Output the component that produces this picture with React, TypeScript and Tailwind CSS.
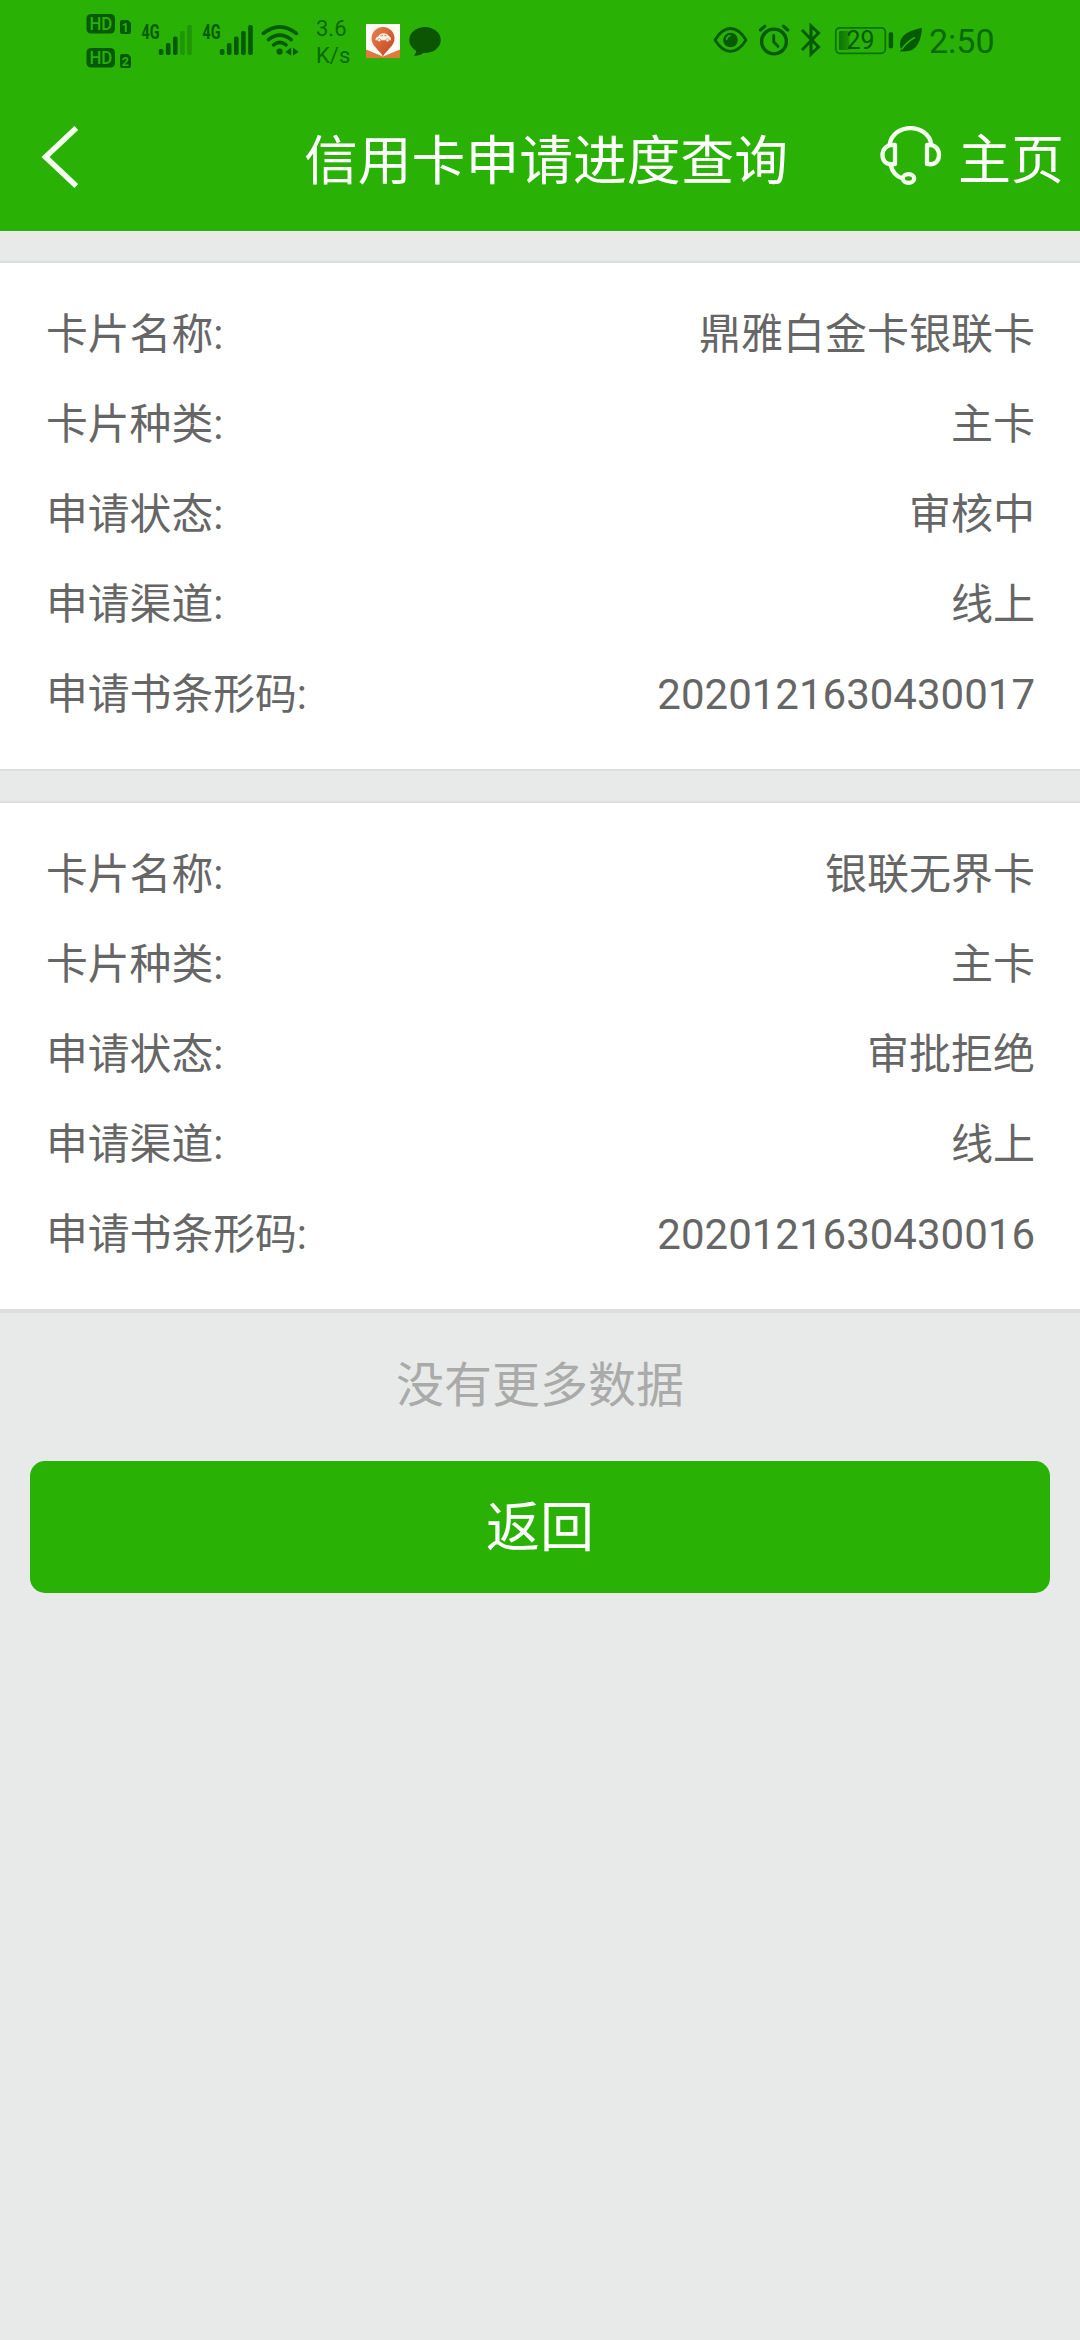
import React from "react";

const FONT = "font-[Roboto,'Noto_Sans_CJK_SC',sans-serif]";

type Field = { label: string; value: string };

const applications: Field[][] = [
  [
    { label: "卡片名称:", value: "鼎雅白金卡银联卡" },
    { label: "卡片种类:", value: "主卡" },
    { label: "申请状态:", value: "审核中" },
    { label: "申请渠道:", value: "线上" },
    { label: "申请书条形码:", value: "2020121630430017" },
  ],
  [
    { label: "卡片名称:", value: "银联无界卡" },
    { label: "卡片种类:", value: "主卡" },
    { label: "申请状态:", value: "审批拒绝" },
    { label: "申请渠道:", value: "线上" },
    { label: "申请书条形码:", value: "2020121630430016" },
  ],
];

function HdBadge({ n }: { n: string }) {
  return (
    <svg width="48" height="22" viewBox="0 0 48 22" className="block">
      <rect x="0.5" y="0" width="28.5" height="19.5" rx="4.5" fill="#065a03" />
      <text x="3.4" y="16" fontSize="18" fontWeight="500" fill="#29b106" textLength="23" lengthAdjust="spacingAndGlyphs">HD</text>
      <path d="M36 6h6l3 3v9q0 2-2 2h-7q-2 0-2-2v-10q0-2 2-2z" fill="#065a03" />
      <text x="39.4" y="18" fontSize="12.5" fontWeight="700" fill="#29b106" textAnchor="middle">{n}</text>
    </svg>
  );
}

function Signal({ level }: { level: number }) {
  const tops = [49, 43, 36.5, 31, 25];
  return (
    <svg width="56" height="80" viewBox="0 0 56 80" className="block shrink-0">
      <text x="1.5" y="38.7" fontSize="20" fontWeight="700" fill="#065a03" textLength="18" lengthAdjust="spacingAndGlyphs">4G</text>
      {tops.map((t, i) => (
        <rect key={t} x={18.8 + i * 7.1} y={t} width="4.6" height={55 - t} rx="1.8" fill="#065a03" opacity={i < level ? 1 : 0.3} />
      ))}
    </svg>
  );
}

function Wifi() {
  return (
    <svg width="40" height="80" viewBox="260 0 40 80" className="block shrink-0" fill="none" stroke="#065a03" strokeWidth="3.6" strokeLinecap="round">
      <path d="M263.3 33.4Q279.8 20.5 296.3 33.4M268.4 39.6Q279.8 30.5 291.2 39.6M273.6 44.8Q279.8 39.8 286 44.8" />
      <circle cx="279.6" cy="51.6" r="3.1" fill="#065a03" stroke="none" />
      <path d="M285.3 52L291.2 47.5V55.5zM293 47.5L298.6 52L293 55.5z" fill="#065a03" stroke="none" />
    </svg>
  );
}

function CarPin() {
  return (
    <svg width="34" height="34" viewBox="0 0 34 34" className="block shrink-0">
      <defs>
        <linearGradient id="pin" x1="0" y1="0" x2="1" y2="1">
          <stop offset="0" stopColor="#e5824f" />
          <stop offset="1" stopColor="#c4431f" />
        </linearGradient>
      </defs>
      <rect width="34" height="34" fill="#fffaf6" />
      <path d="M0 25.5L17 32.5L34 25.5V34H0z" fill="#df7a3e" />
      <path d="M17 32.500C14 26.500 5.500 22 5.500 14.500a11.500 11.500 0 0 1 23 0C28.500 22 20 26.500 17 32.500z" fill="url(#pin)" />
      <path d="M9.500 16.200q-.3-2.800 2.700-3.700Q14 9.200 17.500 9.200q3.700 0 5.500 3 2 .6 2 4z" fill="#fff1e8" />
      <path d="M13.500 12.300q1.500-1.800 3.700-1.800v1.800zM18.300 10.500q2 .1 3.200 1.700h-3.200z" fill="#dba287" />
      <circle cx="13.200" cy="16.200" r="1.500" fill="#fff1e8" stroke="#cf6a43" strokeWidth=".6" />
      <circle cx="21.500" cy="16.200" r="1.500" fill="#fff1e8" stroke="#cf6a43" strokeWidth=".6" />
    </svg>
  );
}

function ChatBubble() {
  return (
    <svg width="32" height="32" viewBox="0 0 32 32" className="block shrink-0" fill="#0b5503">
      <ellipse cx="16" cy="14" rx="15.700" ry="13" />
      <path d="M7.500 22Q8 27 4.800 29.500Q12 30.500 16 25z" />
    </svg>
  );
}

function StatusIcons() {
  return (
    <svg width="112" height="80" viewBox="712 0 112 80" className="block shrink-0" fill="none" stroke="#065a03" strokeWidth="2.800" strokeLinecap="round" strokeLinejoin="round">
      <path d="M715 40Q722 28.500 730.500 28.500T746 40Q739 51.300 730.500 51.300T715 40z" />
      <circle cx="730.500" cy="40" r="7.300" fill="#065a03" stroke="none" />
      <path d="M726.600 39.500q.3-3.300 3.500-3.800" stroke="#29b106" strokeWidth="1.500" />
      <circle cx="774" cy="41.500" r="12.400" strokeWidth="3.400" />
      <path d="M773.700 35.500v6.300l4.300 4.600" strokeWidth="2.800" />
      <path d="M760.500 30l4.200-3.700M787.700 30l-4.200-3.700" strokeWidth="3.200" />
      <path d="M802 30l16.500 17-7.500 7V26l7.500 7-16.500 17" strokeWidth="3" strokeLinejoin="miter" strokeLinecap="butt" />
    </svg>
  );
}

function Battery() {
  return (
    <svg width="60" height="80" viewBox="834 0 60 80" className="block shrink-0">
      <defs>
        <linearGradient id="charge">
          <stop offset="0" stopColor="#127204" />
          <stop offset="1" stopColor="#1e9205" />
        </linearGradient>
      </defs>
      <rect x="835.800" y="27.800" width="49.500" height="25.500" rx="4" fill="none" stroke="#0a7404" strokeWidth="1.700" />
      <rect x="839" y="31" width="10.500" height="19" rx="1.500" fill="url(#charge)" />
      <text x="846.500" y="49" fontSize="25" fontWeight="400" fill="#065a03" textLength="28" lengthAdjust="spacingAndGlyphs">29</text>
      <rect x="888.700" y="32.300" width="4.400" height="16" rx="1.500" fill="#065a03" />
    </svg>
  );
}

function Leaf() {
  return (
    <svg width="24" height="26" viewBox="0 0 24 26" className="block shrink-0">
      <path d="M23 1C12 3 1.500 7 1 17c0 2.500.5 4 1.200 5.500L.8 25l2-.8C14 25.500 21.500 20 23 1z" fill="#065a03" />
      <path d="M2.500 22.500Q8 14.500 16 10.500" stroke="#29b106" strokeWidth="1.500" fill="none" />
    </svg>
  );
}

function StatusBar() {
  return (
    <div className="flex h-20 items-center text-[#0a6b04]">
      <div className="ml-[86px] flex h-20 w-12 flex-col gap-3 pt-[14px]">
        <HdBadge n="1" />
        <HdBadge n="2" />
      </div>
      <div className="ml-[6px] flex">
        <Signal level={3} />
        <div className="ml-[5px]"><Signal level={5} /></div>
      </div>
      <div className="ml-[3px]"><Wifi /></div>
      <div className="ml-[16px] mt-[3px] w-[35px] text-[22px] leading-[27px]">
        <div>3.6</div>
        <div>K/s</div>
      </div>
      <div className="ml-[15px] mt-[2px]"><CarPin /></div>
      <div className="ml-[9px] mt-[12px] h-10"><ChatBubble /></div>
      <div className="ml-auto flex h-20 items-center">
        <StatusIcons />
        <div className="ml-[10px]"><Battery /></div>
        <div className="ml-[5px]"><Leaf /></div>
        <div className="ml-[6px] mt-[2px] w-[151px] text-[34px] leading-10">2:50</div>
      </div>
    </div>
  );
}

function TitleBar() {
  return (
    <div className="flex h-[151px] items-start pt-[37px] text-white">
      <svg width="44" height="76" viewBox="40 117 44 76" className="ml-10 block shrink-0" fill="none" stroke="#f4fff0" strokeWidth="5.500">
        <path d="M76.300 128L45.500 157L76.300 186" />
      </svg>
      <h1 className="ml-[220px] mt-[3px] w-[486px] text-[53.800px] leading-[84px] whitespace-nowrap">信用卡申请进度查询</h1>
      <svg width="66" height="76" viewBox="878 117 66 76" className="ml-[88px] block shrink-0" fill="none" stroke="#f4fff0" strokeWidth="4.300" strokeLinejoin="round">
        <path d="M889.500 145C893 122.500 928 122.500 931.500 145" />
        <path d="M895 145V164C885 165.500 882.500 160 882.500 155S886 144 895 145z" />
        <path d="M927 145V164C936 165.500 939 160 939 155S936 144 927 145z" />
        <path d="M890.500 164.500Q893 175.500 902.500 178.500" />
        <ellipse cx="908.500" cy="178.500" rx="5.700" ry="4.400" />
      </svg>
      <span className="ml-[14px] mt-[3px] text-[53px] leading-[82px] whitespace-nowrap">主页</span>
    </div>
  );
}

function ApplicationCard({ fields }: { fields: Field[] }) {
  return (
    <section className="h-[510px] border-y-2 border-[#dddfde] bg-white pr-[45px] pl-[46px] pt-[27px] text-[#666]">
      {fields.map((f) => (
        <div key={f.label} className="flex h-[90px] items-center justify-between text-[42px] leading-none">
          <span className="text-[41.800px]">{f.label}</span>
          <span>{f.value}</span>
        </div>
      ))}
    </section>
  );
}

export default function App() {
  return (
    <div className={`${FONT} h-[2340px] w-[1080px] overflow-hidden bg-[#e8eae9]`}>
      <header className="bg-[#29b106]">
        <StatusBar />
        <TitleBar />
      </header>
      <main className="flex flex-col gap-[30px] pt-[30px]">
        {applications.map((fields, i) => (
          <ApplicationCard key={i} fields={fields} />
        ))}
      </main>
      <p className="h-[150px] border-t-2 border-[#dddfde] pt-[38px] text-center text-[48px] leading-[70px] text-[#aaa]">没有更多数据</p>
      <div className="px-[30px]">
        <button className="flex h-[132px] w-full items-center justify-center rounded-[15px] bg-[#29b106] pt-1 text-[54px] leading-none text-white">返回</button>
      </div>
    </div>
  );
}
